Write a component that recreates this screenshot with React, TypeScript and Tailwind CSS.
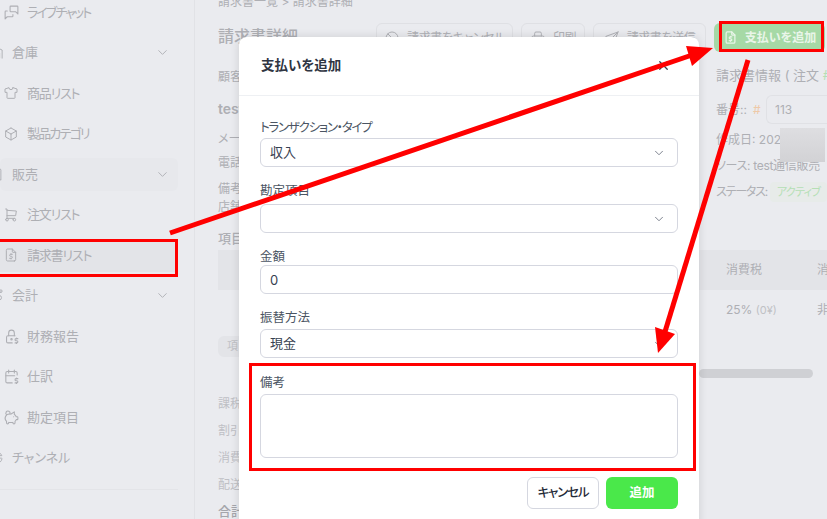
import React from "react";
import { ReactNode } from "react";
import {
  TbBan,
  TbBox,
  TbBuildingWarehouse,
  TbCalendarDollar,
  TbChevronDown,
  TbFileDollar,
  TbLockDollar,
  TbMessages,
  TbPigMoney,
  TbPrinter,
  TbReceipt,
  TbRoute,
  TbSend,
  TbShirt,
  TbShoppingCart,
  TbChartDonut,
  TbX,
} from "react-icons/tb";

const NavParent = ({ icon, label, arrow = true, active = false }: { icon: ReactNode; label: string; arrow?: boolean; active?: boolean }) => (
  <div className="h-[40.5px] flex items-center">
    <div className={`h-[33px] w-full flex items-center pr-[8px] rounded-md ${active ? "bg-[#e7e8ec]" : ""}`}>
      <span className="w-[23px] -ml-[11px] shrink-0">{icon}</span>
      <span className="text-[13px]">{label}</span>
      {arrow && <TbChevronDown size={15} strokeWidth={1.5} className="ml-auto" />}
    </div>
  </div>
);

const NavChild = ({ icon, label, active = false, tight = "" }: { icon: ReactNode; label: string; active?: boolean; tight?: string }) => (
  <div className="h-[40.5px] flex items-center">
    <div className={`h-[33px] w-full flex items-center pl-[3px] ${active ? "bg-[#e3e4e8]" : ""}`}>
      <span className="w-[24px] shrink-0">{icon}</span>
      <span className={`text-[13px] ${tight}`}>{label}</span>
    </div>
  </div>
);

const Sidebar = () => (
  <div className="w-[195px] shrink-0 border-r border-[#e1e2e6] pr-[16px] -mt-[8px] text-[#aeafb4]">
    <NavChild icon={<TbMessages size={17} strokeWidth={1.5} />} label="ライブチャット" tight="tracking-[-1.9px]" />
    <NavParent icon={<TbBuildingWarehouse size={15} strokeWidth={1.5} />} label="倉庫" />
    <NavChild icon={<TbShirt size={16} strokeWidth={1.5} />} label="商品リスト" tight="tracking-[-1.2px]" />
    <NavChild icon={<TbBox size={16} strokeWidth={1.5} />} label="製品カテゴリ" tight="tracking-[-1.8px]" />
    <NavParent icon={<TbReceipt size={15} strokeWidth={1.5} />} label="販売" active />
    <NavChild icon={<TbShoppingCart size={16} strokeWidth={1.5} />} label="注文リスト" tight="tracking-[-1.2px]" />
    <NavChild icon={<TbFileDollar size={16} strokeWidth={1.5} />} label="請求書リスト" active tight="tracking-[-1.2px]" />
    <NavParent icon={<TbRoute size={15} strokeWidth={1.5} />} label="会計" />
    <NavChild icon={<TbLockDollar size={17} strokeWidth={1.5} />} label="財務報告" />
    <NavChild icon={<TbCalendarDollar size={17} strokeWidth={1.5} />} label="仕訳" />
    <NavChild icon={<TbPigMoney size={17} strokeWidth={1.5} />} label="勘定項目" />
    <NavParent icon={<TbChartDonut size={15} strokeWidth={1.5} />} label="チャンネル" arrow={false} />
    <div className="mt-[11px] border-t border-[#e3e4e8]" />
  </div>
);

const ActionButton = ({ icon, label, className }: { icon: ReactNode; label: string; className: string }) => (
  <div className={`h-[29px] flex items-center justify-center gap-[7px] border border-[#dfe0e4] rounded-md text-[12px] text-[#b0b1b6] ${className}`}>
    {icon}
    <span className="tracking-[-0.4px]">{label}</span>
  </div>
);

const Main = () => (
  <div className="flex-1 min-w-0 pl-[23px] text-[#aeafb4] text-[12px]">
    <div className="h-[8px] -mt-[3px] text-[12px] leading-[10px]">請求書一覧 &gt; 請求書詳細</div>
    <div className="flex items-center justify-between mt-[18px] pr-[2px]">
      <div className="text-[16px] font-medium -mt-[3px]">請求書詳細</div>
      <div className="flex gap-[8px]">
        <ActionButton icon={<TbBan size={16} strokeWidth={1.5} />} label="請求書をキャンセル" className="w-[137px]" />
        <ActionButton icon={<TbPrinter size={16} strokeWidth={1.5} />} label="印刷" className="w-[64px]" />
        <ActionButton icon={<TbSend size={16} strokeWidth={1.5} />} label="請求書を送信" className="w-[113px]" />
        <div className="w-[111px] h-[29px] flex items-center justify-center gap-[7px] bg-[#a6d9a6] rounded-md text-[12px] font-semibold text-[#e9f5e9]">
          <TbFileDollar size={15} />
          支払いを追加
        </div>
      </div>
    </div>
    <div className="flex justify-between mt-[13px] h-[165px]">
      <div className="flex flex-col">
        <div className="mt-[3px]">顧客</div>
        <div className="mt-[12px] text-[14px] font-semibold">test</div>
        <div className="mt-[11px]">メール</div>
        <div className="mt-[6px]">電話</div>
        <div className="mt-[8px] leading-[18px]">備考<br />店舗</div>
      </div>
      <div className="w-[111px] flex flex-col whitespace-nowrap">
        <div className="h-[20px] leading-[20px] text-[13px]">
          請求書情報 ( 注文 <span className="text-[#b5dfb5]">#</span>
        </div>
        <div className="mt-[10px] flex items-center">
          <span className="w-[37px]">番号:: </span>
          <span className="text-[#eec9a8] w-[13px]">#</span>
          <span className="w-[61px] h-[29px] flex items-center pl-[8px] border-y border-l border-[#e0e1e5] rounded-l-md">113</span>
        </div>
        <div className="mt-[7px] h-[18px] leading-[18px]">作成日: 202</div>
        <div className="mt-[8px] h-[18px] leading-[18px] tracking-[-0.3px]">ソース: test通信販売</div>
        <div className="mt-[7px] flex items-center">
          <span className="w-[56px] tracking-[-1.2px]">ステータス:</span>
          <span className="text-[11px] leading-[20px] text-[#b5dfb5] tracking-[-0.8px] px-[7px] bg-[#e7ebe9] rounded">アクティブ</span>
        </div>
      </div>
    </div>
    <div className="text-[13px] leading-[16px] font-medium">項目</div>
    <div className="mt-[4px] -mr-[2px] bg-[#e3e4e8] h-[40px] flex items-center pl-[508px] whitespace-nowrap">
      <span className="w-[91px] shrink-0">消費税</span>
      <span className="shrink-0">消費</span>
    </div>
    <div className="h-[40px] flex items-center pl-[508px] whitespace-nowrap">
      <span className="w-[91px] shrink-0">25% <span className="text-[11px] text-[#c0c1c5]">(0¥)</span></span>
      <span className="shrink-0">非</span>
    </div>
    <div className="mt-[6px] w-fit bg-[#e3e4e8] rounded-md text-[11px] text-[#c0c1c5] px-[9px] h-[21px] flex items-center">項目</div>
    <div className="mt-[12px] h-[9px] relative">
      <div className="absolute left-[481px] right-[14px] h-[9px] rounded-full bg-[#cfd0d4]" />
    </div>
    <div className="mt-[17px] flex flex-col gap-[10px] leading-[17px] text-[#bfc0c5]">
      <div>課税</div>
      <div>割引</div>
      <div>消費</div>
      <div>配送</div>
      <div className="text-[13px] text-[#a5a6ab] font-medium">合計</div>
    </div>
  </div>
);

const Field = ({ label, children, className, tight = "" }: { label: string; children: ReactNode; className: string; tight?: string }) => (
  <div className={className}>
    <div className={`text-[12.5px] leading-[16px] text-[#4b5563] ${tight}`}>{label}</div>
    {children}
  </div>
);

const SelectBox = ({ value, className }: { value: string; className: string }) => (
  <div className={`w-full h-[29px] flex items-center justify-between pl-[9px] pr-[11px] border border-[#d5d7e0] rounded-md text-[13px] text-[#374151] ${className}`}>
    <span>{value}</span>
    <TbChevronDown size={14} strokeWidth={1.5} className="text-[#6b7280]" />
  </div>
);

const PaymentModal = () => (
  <div className="absolute left-[239px] top-[37px] w-[460px] h-[500px] bg-white rounded-lg shadow-[0_0_10px_rgba(0,0,0,0.12)]">
    <div className="h-[59px] flex items-center justify-between pl-[22px] pr-[28px] pb-[1px] border-b border-[#eef0f3]">
      <span className="text-[13.5px] font-semibold text-[#2f3542]">支払いを追加</span>
      <TbX size={15} className="text-[#374151]" />
    </div>
    <div className="px-[21px] pt-[24px]">
      <Field label="トランザクション・タイプ" className="" tight="tracking-[-1.25px]">
        <SelectBox value="収入" className="mt-[2px]" />
      </Field>
      <Field label="勘定項目" className="mt-[16px]">
        <SelectBox value="" className="mt-[5px]" />
      </Field>
      <Field label="金額" className="mt-[16px]">
        <input readOnly value="0" className="w-full h-[29px] pl-[9px] border border-[#d5d7e0] rounded-md text-[13px] text-[#374151] outline-none" />
      </Field>
      <Field label="振替方法" className="mt-[16px]">
        <SelectBox value="現金" className="mt-[3px]" />
      </Field>
      <Field label="備考" className="mt-[17px]">
        <textarea readOnly className="block mt-[3px] w-full h-[64px] border border-[#d5d7e0] rounded-md resize-none outline-none" />
      </Field>
      <div className="flex justify-end gap-[7px] mt-[19px]">
        <div className="w-[72px] h-[32px] flex items-center justify-center border border-[#d5d7e0] rounded-md text-[12.5px] font-medium text-[#1f2937] tracking-[-1.2px]">キャンセル</div>
        <div className="w-[72px] h-[32px] flex items-center justify-center rounded-md bg-[#4ae84a] text-[12.5px] font-semibold text-white">追加</div>
      </div>
    </div>
  </div>
);

const App = () => (
  <div className="relative w-[827px] h-[519px] overflow-hidden bg-[#eaebef] flex font-['Inter','Noto_Sans_CJK_JP',sans-serif] [font-feature-settings:'palt']">
    <Sidebar />
    <Main />
    <div className="absolute left-[780px] top-[128px] w-[45px] h-[34px] bg-gradient-to-b from-[#dedee1] to-[#d2d2d5]" />
    <PaymentModal />
    {/* red markup on top of the screenshot */}
    <div className="absolute -left-[3px] top-[239px] w-[181px] h-[38px] border-[3px] border-[#f00]" />
    <div className="absolute left-[719px] top-[21px] w-[105px] h-[31px] border-[3px] border-[#f00]" />
    <div className="absolute left-[249px] top-[363px] w-[447px] h-[108px] border-[3px] border-[#f00]" />
    <svg className="absolute left-0 top-0" width="827" height="519" viewBox="0 0 827 519" fill="none">
      <path d="M170 233L695 54" stroke="#f00" strokeWidth="5" />
      <path d="M713 48L686 46L692 66Z" fill="#f00" />
      <path d="M748 60L664 335" stroke="#f00" strokeWidth="5" />
      <path d="M658 353L655 327L675 334Z" fill="#f00" />
    </svg>
  </div>
);

export default App;
